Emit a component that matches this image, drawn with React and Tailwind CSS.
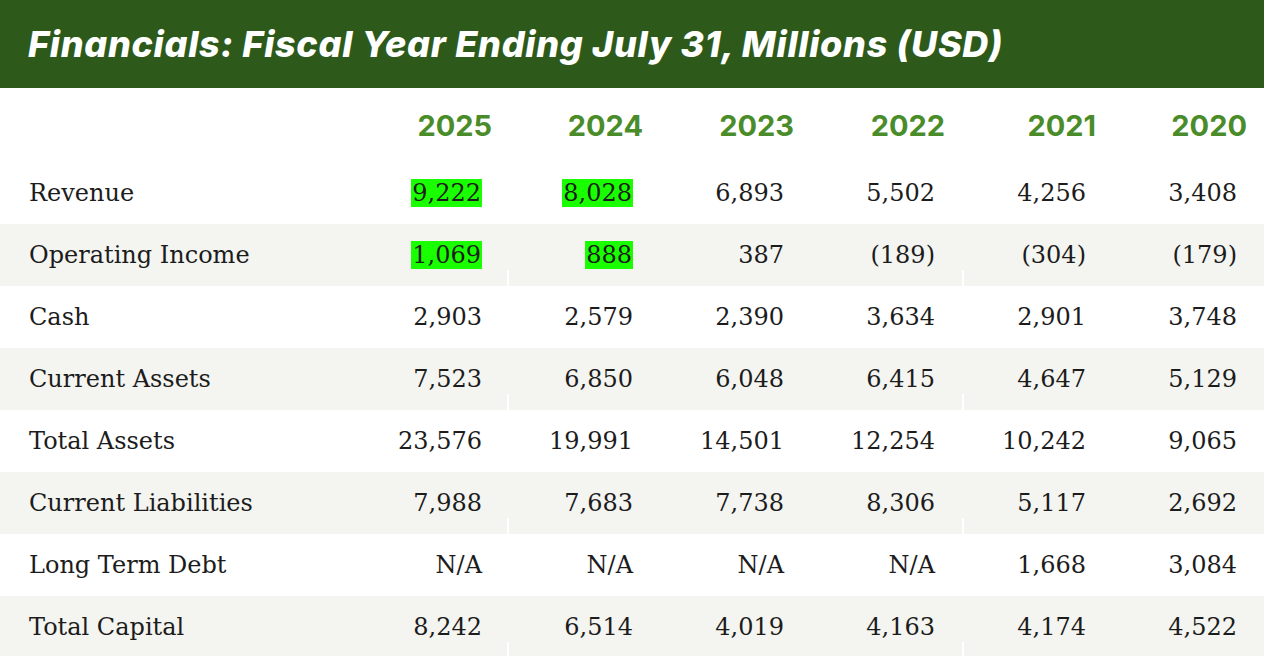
import React from "react";

const years = ["2025", "2024", "2023", "2022", "2021", "2020"];

const rows = [
  { label: "Revenue", vals: ["9,222", "8,028", "6,893", "5,502", "4,256", "3,408"], hl: [0, 1] },
  { label: "Operating Income", vals: ["1,069", "888", "387", "(189)", "(304)", "(179)"], hl: [0, 1] },
  { label: "Cash", vals: ["2,903", "2,579", "2,390", "3,634", "2,901", "3,748"], hl: [] },
  { label: "Current Assets", vals: ["7,523", "6,850", "6,048", "6,415", "4,647", "5,129"], hl: [] },
  { label: "Total Assets", vals: ["23,576", "19,991", "14,501", "12,254", "10,242", "9,065"], hl: [] },
  { label: "Current Liabilities", vals: ["7,988", "7,683", "7,738", "8,306", "5,117", "2,692"], hl: [] },
  { label: "Long Term Debt", vals: ["N/A", "N/A", "N/A", "N/A", "1,668", "3,084"], hl: [] },
  { label: "Total Capital", vals: ["8,242", "6,514", "4,019", "4,163", "4,174", "4,522"], hl: [] },
];

const serif = "font-['DejaVu_Serif',serif]";

export default function App() {
  return (
    <div className="w-[1264px] h-[656px] overflow-hidden bg-white">
      <div className="h-[88px] bg-[#2d5a1b] flex items-center pl-[28px]">
        <h1 className="font-['Inter',sans-serif] italic font-extrabold text-[36px] text-white tracking-[0.7px] leading-none whitespace-nowrap">
          Financials: Fiscal Year Ending July 31, Millions (USD)
        </h1>
      </div>
      <div className="grid grid-cols-[341px_repeat(6,151px)] h-[74px] items-center">
        <div />
        {years.map((y) => (
          <div
            key={y}
            className="text-right font-['Inter',sans-serif] font-bold text-[29px] text-[#4a8c2a] tracking-[0px] leading-none"
          >
            {y}
          </div>
        ))}
      </div>
      {rows.map((r, i) => {
        const gray = i % 2 === 1;
        return (
          <div
            key={r.label}
            className={`relative grid grid-cols-[341px_repeat(6,151px)] h-[62px] items-center ${serif} text-[24px] text-[#1c1c1c] ${gray ? "bg-[#f4f5f1]" : "bg-white"}`}
          >
            <div className="pl-[29px] whitespace-nowrap">{r.label}</div>
            {r.vals.map((v, j) => (
              <div key={j} className="text-right pr-[10px] whitespace-nowrap">
                {r.hl.includes(j) ? (
                  <span className="bg-[#19ff00] px-[1px]">{v}</span>
                ) : (
                  v
                )}
              </div>
            ))}
            {gray && (
              <>
                <div className="absolute left-[507px] bottom-0 w-[2px] h-[16px] bg-white" />
                <div className="absolute left-[962px] bottom-0 w-[2px] h-[16px] bg-white" />
              </>
            )}
          </div>
        );
      })}
    </div>
  );
}
